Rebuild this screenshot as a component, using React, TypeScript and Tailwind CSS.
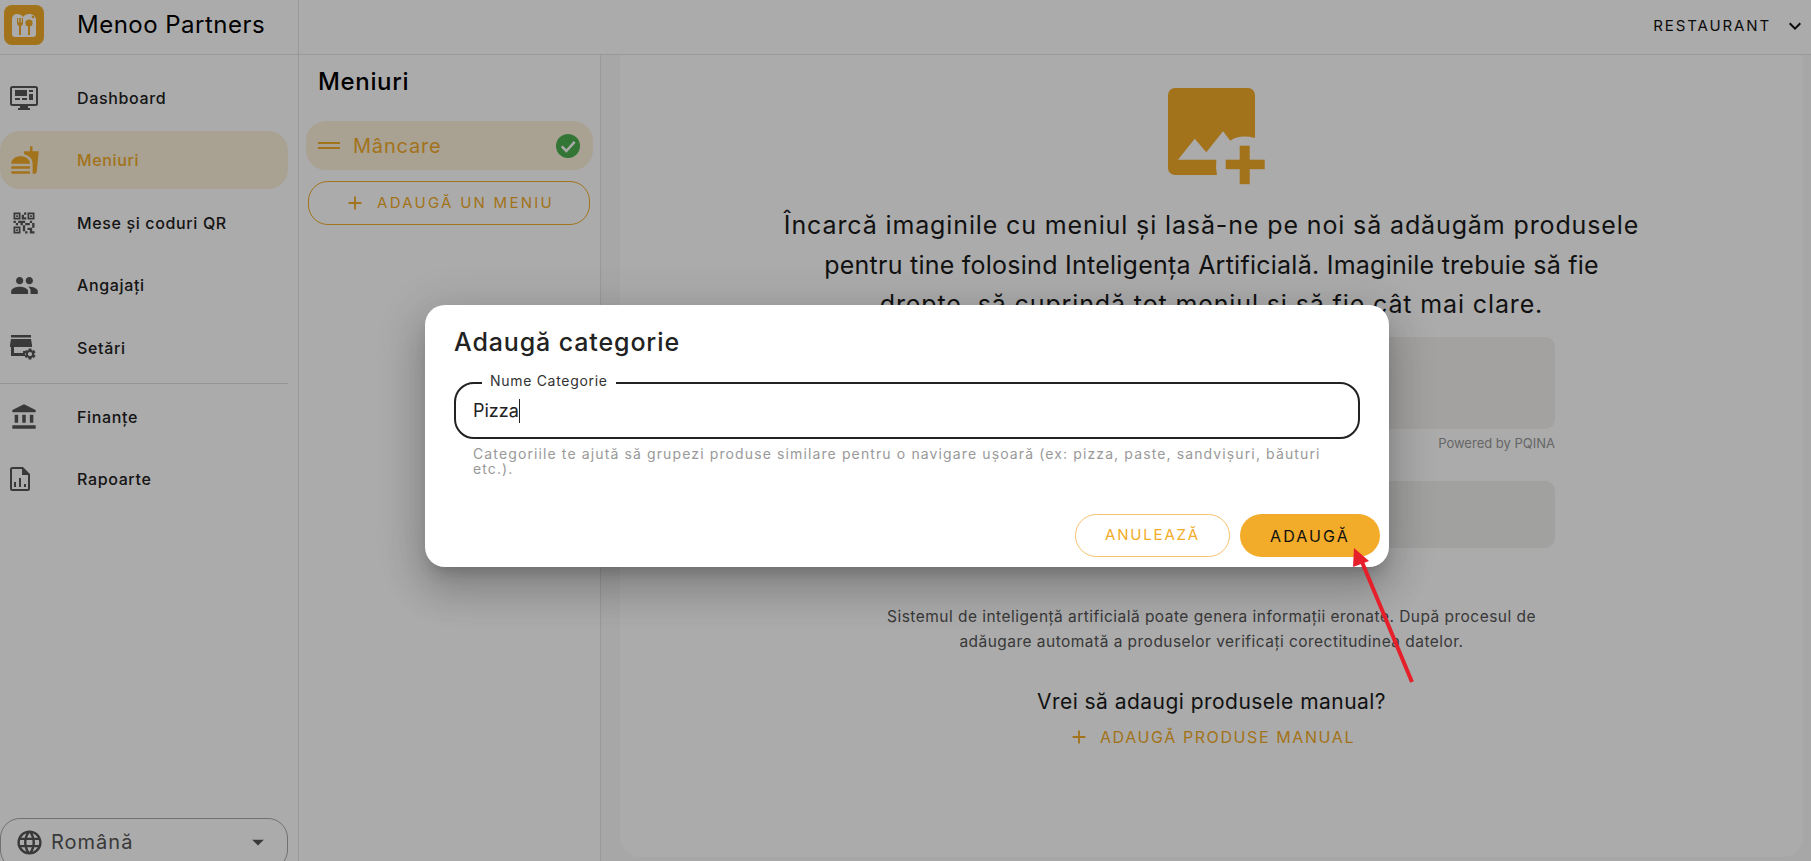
import { MdAccountBalance, MdAdd, MdArrowDropDown, MdFastfood, MdKeyboardArrowDown, MdLanguage, MdPeople, MdQrCode2, MdSettings } from 'react-icons/md'
import type { ReactNode } from 'react'

function LogoIcon() {
  return (
    <svg viewBox="0 0 40 40" className="size-10 shrink-0">
      <rect width="40" height="40" rx="8" fill="#f2ac29" />
      <path d="M8 15c0-4 2-6 5-6 2.500 0 4.500 1 6 3 1.500-2 3.500-3 6-3 3.500 0 7 2 7 6v14c0 2-1 3-3 3H11c-2 0-3-1-3-3z" fill="#fff" />
      <path d="M13 13v5c0 1.500.8 2.500 2 3v9h2v-9c1.200-.5 2-1.500 2-3v-5h-1.200v4.500h-1V13h-1.600v4.500h-1V13z" fill="#f2ac29" />
      <circle cx="25" cy="18" r="3.600" fill="#f2ac29" />
      <rect x="24" y="20" width="2" height="10" fill="#f2ac29" />
      <circle cx="29" cy="12" r="1.300" fill="#f2ac29" />
    </svg>
  )
}

function MonitorIcon() {
  return (
    <svg viewBox="0 0 28 24" className="h-[24px] w-[28px]" fill="#555">
      <path d="M2.500 0h23A2.500 2.500 0 0 1 28 2.500v15a2.500 2.500 0 0 1-2.500 2.500H18v2h2v2H8v-2h2v-2H2.500A2.500 2.500 0 0 1 0 17.500v-15A2.500 2.500 0 0 1 2.500 0zM2 2v16h24V2z" fillRule="evenodd" />
      <rect x="5" y="4" width="12" height="6" />
      <rect x="5" y="12" width="5" height="2" />
      <rect x="12" y="12" width="5" height="2" />
      <rect x="19" y="4" width="4" height="2" />
      <rect x="19" y="8" width="4" height="6" />
    </svg>
  )
}

function StoreSettingsIcon() {
  return (
    <div className="relative h-[26px] w-[27px]">
      <svg viewBox="0 0 27 26" className="h-[26px] w-[27px]" fill="#555">
        <rect x="1" y="0" width="20" height="2.500" />
        <path d="M1 4h20l1 6v2H0v-2z" />
        <path d="M1 12h3v6h9v-2h2v5H1z" />
      </svg>
      <MdSettings className="absolute bottom-0 right-0 text-[14px] text-[#555]" />
    </div>
  )
}

function ReportIcon() {
  return (
    <svg viewBox="0 0 20 24" className="h-[24px] w-[20px]" fill="#555">
      <path fillRule="evenodd" d="M2.500 0H13l7 7v14.500a2.500 2.500 0 0 1-2.500 2.500h-15A2.500 2.500 0 0 1 0 21.500v-19A2.500 2.500 0 0 1 2.500 0zM2 2v20h16V8h-6V2z" />
      <rect x="4" y="15" width="2" height="5" />
      <rect x="9" y="11" width="2" height="9" />
      <rect x="14" y="17" width="2" height="3" />
    </svg>
  )
}

function AddImageIcon() {
  return (
    <svg viewBox="0 0 97 97" className="ml-[10px] size-[97px] shrink-0">
      <rect width="87" height="87" rx="7" fill="#f2ac29" />
      <path d="M10 71.700L26.700 50.700L38.300 64.300L55 43.300L62.300 52.700Q72 46 87 50V87H49Q47.500 80 48.300 71.700Z" fill="#fff" />
      <rect x="57.700" y="71.700" width="39" height="9.500" fill="#f2ac29" />
      <rect x="71.700" y="57.700" width="10" height="38.500" fill="#f2ac29" />
    </svg>
  )
}

type NavItem = { label: string; icon: ReactNode; active?: boolean }

const navTop: NavItem[] = [
  { label: 'Dashboard', icon: <MonitorIcon /> },
  { label: 'Meniuri', icon: <MdFastfood className="text-[30px]" />, active: true },
  { label: 'Mese și coduri QR', icon: <MdQrCode2 className="text-[28px] text-[#555]" /> },
  { label: 'Angajați', icon: <MdPeople className="text-[29px] text-[#555]" /> },
  { label: 'Setări', icon: <StoreSettingsIcon /> },
]

const navBottom: NavItem[] = [
  { label: 'Finanțe', icon: <MdAccountBalance className="text-[28px] text-[#555]" /> },
  { label: 'Rapoarte', icon: <ReportIcon /> },
]

function NavRow({ label, icon, active }: NavItem) {
  return (
    <div
      className={`flex h-[58px] w-[288px] shrink-0 items-center rounded-[20px] ${
        active ? 'bg-[#fdf0da] text-[#f2ac29]' : 'text-[#222]'
      }`}
    >
      <div className="flex w-[77px] shrink-0 justify-start pl-[10px]">{icon}</div>
      <span className="text-[16px] font-medium tracking-[0.04em]">{label}</span>
    </div>
  )
}

export default function App() {
  return (
    <div className="relative flex h-screen w-full flex-col overflow-hidden bg-white font-['Inter',sans-serif] text-[#1a1a1a]">
      <header className="flex h-[55px] shrink-0 items-center border-b border-[#e4e4e4]">
        <div className="flex h-full w-[299px] shrink-0 items-center gap-[33px] border-r border-[#e4e4e4] pb-[4px] pl-[4px]">
          <LogoIcon />
          <span className="text-[24px] leading-none tracking-[0.02em] text-black">Menoo Partners</span>
        </div>
        <div className="ml-auto flex items-center gap-[12px] pb-[2px] pr-[4px]">
          <span className="text-[15px] tracking-[0.125em] text-[#111]">RESTAURANT</span>
          <MdKeyboardArrowDown className="text-[24px] text-[#111]" />
        </div>
      </header>

      <div className="flex min-h-0 flex-1">
        <aside className="flex w-[299px] shrink-0 flex-col border-r border-[#e4e4e4] pt-[14px]">
          <nav className="flex flex-col gap-[4.400px]">
            {navTop.map((item) => (
              <NavRow key={item.label} {...item} />
            ))}
          </nav>
          <div className="mb-[4px] mt-[6px] h-px w-[288px] bg-[#e0e0e0]" />
          <nav className="flex flex-col gap-[4px]">
            {navBottom.map((item) => (
              <NavRow key={item.label} {...item} />
            ))}
          </nav>
          <div className="mt-auto flex h-[52px] w-[288px] shrink-0 translate-y-[9px] items-start rounded-[20px] border border-[#a8a8a8] pl-[14px] pr-[15px] pt-[9px] text-[#555]">
            <MdLanguage className="text-[29px]" />
            <span className="ml-[7px] text-[20px] leading-[29px] tracking-[0.05em]">Română</span>
            <MdArrowDropDown className="ml-auto text-[28px]" />
          </div>
        </aside>

        <section className="flex w-[302px] shrink-0 flex-col border-r border-[#e4e4e4] pl-[7px] pt-[12px]">
          <h2 className="pl-[12px] text-[24px] font-medium leading-[30px] tracking-[0.027em] text-black">Meniuri</h2>
          <div className="mt-[24px] flex h-[49px] w-[287px] items-center rounded-[20px] bg-[#fdf0da] pl-[12px] pr-[13px] text-[#f2ac29]">
            <div className="flex w-[22px] flex-col gap-[2.500px]">
              <div className="h-[2.500px] bg-[#f2ac29]" />
              <div className="h-[2.500px] bg-[#f2ac29]" />
            </div>
            <span className="ml-[13px] text-[20px] tracking-[0.04em]">Mâncare</span>
            <div className="ml-auto flex size-[24px] items-center justify-center rounded-full bg-[#4caf50]">
              <svg viewBox="0 0 24 24" className="size-[20px]" fill="none" stroke="#fff" strokeWidth="3">
                <polyline points="4.500,12.500 10,18 20,7" />
              </svg>
            </div>
          </div>
          <div className="ml-[2px] mt-[11px] flex h-[44px] w-[282px] items-center justify-center gap-[11px] rounded-[20px] border border-[#f2ac29] text-[#f2ac29]">
            <MdAdd className="text-[22px]" />
            <span className="text-[15px] tracking-[0.15em]">ADAUGĂ UN MENIU</span>
          </div>
        </section>

        <main className="flex min-w-0 flex-1 bg-[#fafafa] pb-[4px] pl-[19px] pr-[8px]">
          <div className="flex min-w-0 flex-1 flex-col items-center rounded-b-[20px] bg-white pt-[33px]">
            <AddImageIcon />
            <p className="mt-[21px] w-[1000px] text-center text-[25px] leading-[39.500px] tracking-[0.035em] text-[#1a1a1a]">
              Încarcă imaginile cu meniul și lasă-ne pe noi să adăugăm produsele
              <br />
              <span className="tracking-[0.01em]">pentru tine folosind Inteligența Artificială. Imaginile trebuie să fie</span>
              <br />
              drepte, să cuprindă tot meniul și să fie cât mai clare.
            </p>
            <div className="mt-[12.500px] h-[92px] w-[687px] shrink-0 rounded-[10px] bg-[#f3f2ef]" />
            <div className="mt-[6px] w-[687px] text-right text-[13px] leading-[16px] text-[#999]">Powered by PQINA</div>
            <div className="mt-[30px] h-[67px] w-[687px] shrink-0 rounded-[10px] bg-[#f0f0ef]" />
            <p className="mt-[56px] text-center text-[15.500px] leading-[25px] tracking-[0.03em] text-[#555]">
              Sistemul de inteligență artificială poate genera informații eronate. După procesul de
              <br />
              adăugare automată a produselor verificați corectitudinea datelor.
            </p>
            <p className="mt-[33px] text-[21px] leading-[30px] tracking-[0.022em] text-[#1a1a1a]">Vrei să adaugi produsele manual?</p>
            <div className="mt-[8px] flex h-[24px] items-center gap-[10px] text-[#f2ac29]">
              <MdAdd className="text-[22px]" />
              <span className="text-[16px] tracking-[0.1em]">ADAUGĂ PRODUSE MANUAL</span>
            </div>
          </div>
        </main>
      </div>

      {/* fundal dialog */}
      <div className="absolute inset-0 bg-black/33 pl-[425px] pt-[305px]">
        <div className="flex h-[262px] w-[964px] flex-col rounded-[20px] bg-white pl-[29px] pr-[9px] pt-[23px] shadow-[0_11px_15px_-7px_rgba(0,0,0,0.2),0_24px_38px_3px_rgba(0,0,0,0.14),0_9px_46px_8px_rgba(0,0,0,0.12)]">
          <h2 className="text-[25px] font-medium leading-[28px] tracking-[0.035em] text-[#222]">Adaugă categorie</h2>
          <div className="relative mt-[26px] flex h-[57px] w-[906px] shrink-0 items-center rounded-[20px] border-2 border-[#222] pl-[17px]">
            <span className="absolute -top-[11px] left-[26px] bg-white px-[8px] text-[14px] leading-[16px] tracking-[0.05em] text-[#333]">
              Nume Categorie
            </span>
            <span className="text-[18px] text-[#222]">Pizza</span>
            <div className="h-[24px] w-px bg-[#222]" />
          </div>
          <p className="mt-[7px] pl-[19px] text-[14px] leading-[15px] tracking-[0.08em] text-[#999]">
            Categoriile te ajută să grupezi produse similare pentru o navigare ușoară (ex: pizza, paste, sandvișuri, băuturi
            <br />
            etc.).
          </p>
          <div className="mt-auto flex justify-end gap-[10px] pb-[10px]">
            <div className="flex h-[43px] w-[155px] items-center justify-center rounded-[22px] border border-[#f5c26b] text-[15px] tracking-[0.12em] text-[#f2ac29]">
              ANULEAZĂ
            </div>
            <div className="flex h-[43px] w-[140px] items-center justify-center rounded-[22px] bg-[#f2ac29] text-[16px] tracking-[0.13em] text-[#111]">
              ADAUGĂ
            </div>
          </div>
        </div>
      </div>

      {/* sageata adnotare */}
      <svg viewBox="0 0 1811 861" className="pointer-events-none absolute left-0 top-0 h-[861px] w-[1811px]">
        <line x1="1412" y1="682" x2="1362" y2="562" stroke="#e5202b" strokeWidth="4" />
        <polygon points="1354,548 1369,561 1353,567" fill="#e5202b" />
      </svg>
    </div>
  )
}
